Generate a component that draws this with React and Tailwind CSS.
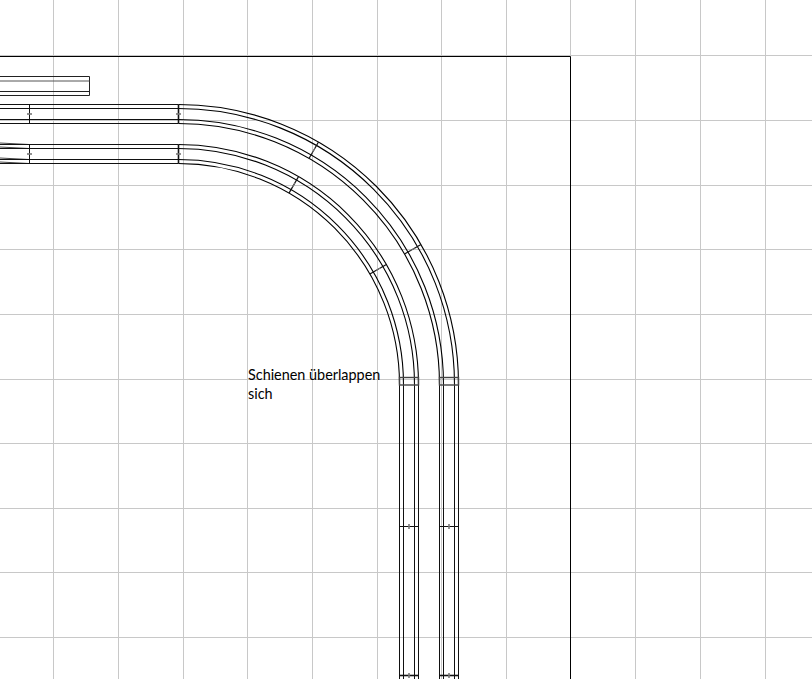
const Xs = [53.5, 118.5, 183.5, 247.5, 312.5, 377.5, 441.5, 506.5, 570.5, 635.5, 700.5, 765.5];
const Ys = [55.5, 120.5, 185.5, 249.5, 314.5, 379.5, 443.5, 508.5, 572.5, 637.5];

const CX = 178.5;
const CY = 384.5;

function polar(r, deg) {
  const a = (deg * Math.PI) / 180;
  return [CX + r * Math.sin(a), CY - r * Math.cos(a)];
}

function Track({ r }) {
  // r = outer radius of this track
  const radii = [r, r - 4, r - 15, r - 19];
  const top = CY - r;
  const right = CX + r;
  return (
    <g>
      {radii.map((rad) => (
        <g key={rad}>
          <line x1="0" y1={CY - rad} x2={CX} y2={CY - rad} />
          <path d={`M${CX} ${CY - rad}A${rad} ${rad} 0 0 1 ${CX + rad} ${CY}`} stroke="#000" strokeWidth="1.1" />
          <line x1={CX + rad} y1={CY - 7} x2={CX + rad} y2="679" />
        </g>
      ))}

      {/* ties on the straight part */}
      {[
        [29.5, 1],
        [178.5, 1.6],
      ].map(([x, w]) => (
        <g key={x}>
          <line x1={x} y1={top} x2={x} y2={top + 19} strokeWidth={w} />
          <line x1={x - 2.5} y1={top + 9.5} x2={x + 2.5} y2={top + 9.5} stroke="#777" strokeWidth="1.6" />
        </g>
      ))}

      {/* ties on the curve */}
      {[30, 60].map((deg) => {
        const [x1, y1] = polar(r, deg);
        const [x2, y2] = polar(r - 19, deg);
        const [x3, y3] = polar(r - 7, deg);
        const [x4, y4] = polar(r - 12, deg);
        return (
          <g key={deg}>
            <line x1={x1} y1={y1} x2={x2} y2={y2} strokeWidth="1.2" />
            <line x1={x3} y1={y3} x2={x4} y2={y4} stroke="#777" />
          </g>
        );
      })}

      {/* joint box where the curve meets the straight */}
      <rect x={right - 19} y="377.5" width="19" height="7.5" stroke="#444" strokeWidth="1.4" />

      {/* ties on the vertical part */}
      {[
        [526, 1],
        [675, 1.6],
      ].map(([y, w]) => (
        <g key={y}>
          <line x1={right - 19} y1={y + 0.5} x2={right} y2={y + 0.5} strokeWidth={w} />
          <line x1={right - 9.5} y1={y - 2} x2={right - 9.5} y2={y + 3} stroke="#777" strokeWidth="1.6" />
        </g>
      ))}
    </g>
  );
}

export default function App() {
  return (
    <div className="relative h-[679px] w-[812px] overflow-hidden bg-white">
      <svg width="812" height="679" className="absolute inset-0" fill="none">
        <g stroke="#c8c8c8" strokeWidth="1">
          {Xs.map((x) => (
            <line key={x} x1={x} y1="0" x2={x} y2="679" />
          ))}
          {Ys.map((y) => (
            <line key={y} x1="0" y1={y} x2="812" y2={y} />
          ))}
        </g>

        {/* sheet border */}
        <path d="M0 56.5H570.5V679" stroke="#000" />

        {/* short siding at top left */}
        <g stroke="#222">
          <path d="M0 76.5H89.5V95.5H0" />
          <path d="M0 81H89.5" stroke="#555" />
          <path d="M0 91.5H89.5" />
        </g>

        {/* the overlap at the left end of the lower track */}
        <g stroke="#444">
          <path d="M0 143L29 144.5" />
          <path d="M0 147L29 148.5" />
          <path d="M0 158L29 159.5" />
          <path d="M0 162L29 163.5" />
        </g>

        <g stroke="#111" strokeWidth="1">
          <Track r={280} />
          <Track r={240} />
        </g>
      </svg>

      <div className="absolute left-[248px] top-[366px] w-[140px] font-['Lato',sans-serif] text-[14.4px] leading-[18.5px] text-black">
        Schienen überlappen sich
      </div>
    </div>
  );
}
